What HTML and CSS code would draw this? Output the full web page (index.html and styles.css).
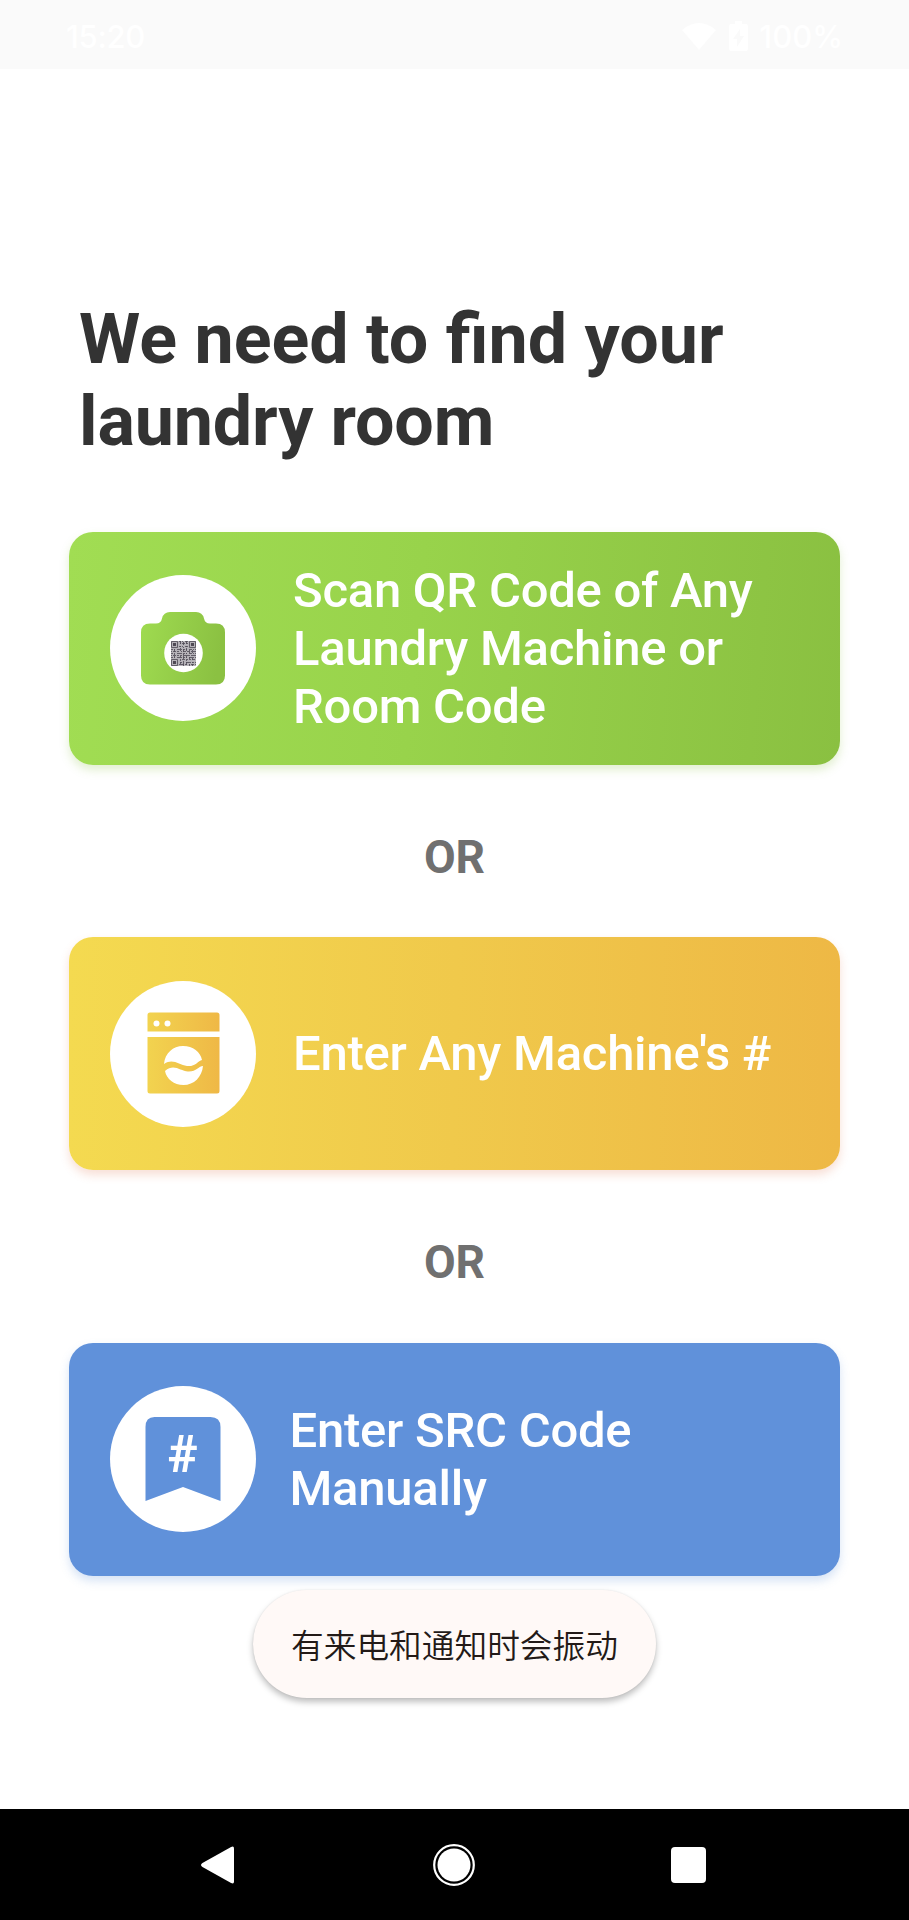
FILE: index.html
```html
<!DOCTYPE html>
<html lang="en">
<head>
<meta charset="utf-8">
<title>Find your laundry room</title>
<link rel="stylesheet" href="styles.css">
</head>
<body>
<header class="status">
  <span class="clock">15:20</span>
  <div class="status-icons">
    <svg class="wifi" width="36" height="28" viewBox="0 0 36 28"><path d="M1 8Q18-6 35 8L18 28Z"/></svg>
    <svg class="battery" width="19" height="30" viewBox="0 0 19 30"><path fill-rule="evenodd" d="M6 0h7v3h4q2 0 2 2v23q0 2-2 2H2q-2 0-2-2V5q0-2 2-2h4ZM11 8 4 18h4v8l7-11h-4Z"/></svg>
    <span class="percent">100%</span>
  </div>
</header>
<main class="content">
  <h1 class="title">We need to find your<br><span class="title-end">laundry room</span></h1>
  <a class="card card-scan">
    <svg class="badge" width="146" height="146" viewBox="0 0 146 146">
      <defs><linearGradient id="green" x1="0" x2="1" y1="0" y2=".15"><stop stop-color="#9fdb50"/><stop offset="1" stop-color="#8bc142"/></linearGradient></defs>
      <circle cx="73" cy="73" r="73" fill="#fff"/>
      <path fill="url(#green)" d="M40 48.500h6q5 0 6-5 1.500-6.500 8-6.500h26q6.500 0 8 6.500 1 5 6 5h6q9 0 9 9v43q0 9-9 9H40q-9 0-9-9v-43q0-9 9-9Z"/>
      <circle cx="73.500" cy="78" r="19.300" fill="#fff"/>
      <g transform="translate(61 66)" fill="none" stroke="#4e4954" stroke-opacity=".8">
        <rect width="25" height="25" fill="#b5b2b8" stroke="none"/>
        <path stroke-dasharray="2 1 1 2 3 1 1 1" d="M8 .5h9M0 8.500h25M0 12.500h25M8 5.500h10M0 16.500h25M9 21.500h16"/>
        <path stroke-dasharray="1 1 3 1 2 2" d="M9 2.500h8M0 10.500h25M0 14.500h25M9 18.500h16M8 23.500h17"/>
        <path stroke-dasharray="3 2 1 1" d="M9.500 0v25M12.500 1v24M15.500 0v25M18.500 9v16M21.500 9v16M3.500 8v9"/>
        <path d="M.5.500h6v6h-6ZM18.500.500h6v6h-6ZM.5 18.500h6v6h-6Z"/>
        <path fill="#4e4954" stroke="none" d="M2 2h3v3H2ZM20 2h3v3h-3ZM2 20h3v3H2Z"/>
      </g>
    </svg>
    <span class="label">Scan QR Code of Any<br>Laundry Machine or<br>Room Code</span>
  </a>
  <div class="or">OR</div>
  <a class="card card-machine">
    <svg class="badge" width="146" height="146" viewBox="0 0 146 146">
      <defs><linearGradient id="gold"><stop stop-color="#f2d34f"/><stop offset="1" stop-color="#efb846"/></linearGradient></defs>
      <circle cx="73" cy="73" r="73" fill="#fff"/>
      <path fill="url(#gold)" fill-rule="evenodd" d="M40 31.500h67q2.500 0 2.500 2.500v16.500h-72V34q0-2.500 2.500-2.500ZM37.500 56h72v54q0 2.500-2.500 2.500H40q-2.500 0-2.500-2.500Z"/>
      <g fill="#fff"><circle cx="46.500" cy="42.500" r="3"/><circle cx="57.500" cy="42.500" r="3"/>
      <path d="M54 83C55 72 63 65 73 65S90.500 71 92 79C88 80 85 86 77 85 69 84 63 77 54 83ZM55 90C64 82 70 90 78 90.500 86 91 89 85 93 85 92 96 84 104 73.500 104 64 104 56.500 98 55 90Z"/></g>
    </svg>
    <span class="label">Enter Any Machine's #</span>
  </a>
  <div class="or or-last">OR</div>
  <a class="card card-code">
    <svg class="badge" width="146" height="146" viewBox="0 0 146 146">
      <circle cx="73" cy="73" r="73" fill="#fff"/>
      <path fill="#6091da" d="M44.500 31h56q10 0 10 10v74L73 101l-37.500 14V41q0-10 9-10Z"/>
      <text class="hash" x="72.500" y="85.500">#</text>
    </svg>
    <span class="label">Enter SRC Code<br>Manually</span>
  </a>
</main>
<div class="toast" lang="zh-CN">有来电和通知时会振动</div>
<nav class="nav">
  <svg width="33" height="40" viewBox="0 0 34 40"><path d="M1.500 18 31 1.500q3-1.500 3 1.500v34q0 3-3 1.500L1.500 22q-3-2 0-4Z"/></svg>
  <svg width="42" height="42" viewBox="0 0 42 42"><circle cx="21" cy="21" r="16.500"/><circle cx="21" cy="21" r="19.800" fill="none" stroke="#fff" stroke-width="2.200"/></svg>
  <svg width="35" height="36" viewBox="0 0 35 36"><rect width="35" height="36" rx="4"/></svg>
</nav>
</body>
</html>
```
FILE: styles.css
```css
* { box-sizing: border-box; }
body {
  margin: 0;
  height: 1920px;
  display: flex;
  flex-direction: column;
  background: #fff;
  font-family: Roboto, "Liberation Sans", sans-serif;
  overflow: hidden;
}
svg { display: block; flex: none; }
.status {
  height: 69px;
  padding: 3px 66px 0;
  display: flex;
  align-items: center;
  justify-content: space-between;
  background: #fafafa;
  color: #fff;
  fill: #fff;
  font: 500 31px/1 Inter, Roboto, sans-serif;
}
.clock { letter-spacing: -0.3px; }
.status-icons { display: flex; align-items: center; }
.battery { margin: 0 11px 0 12px; }
.content {
  flex: 1;
  padding: 229px 69px 0;
}
.title {
  margin: 0 0 63px;
  padding-left: 10px;
  color: #333;
  font-size: 70px;
  font-weight: 700;
  line-height: 82px;
  height: 171px;
}
.title-end { letter-spacing: -0.150px; }
.card {
  height: 233px;
  display: flex;
  align-items: center;
  padding-left: 41px;
  border-radius: 24px;
  color: #fff;
  width: 771px;
}
.card-scan {
  background: linear-gradient(95deg, #a1dd53, #98d34b 45%, #8ac041);
  box-shadow: 0 5px 10px rgba(139, 193, 66, .25);
}
.card-scan .badge,
.card-code .badge { margin-bottom: 2px; }
.card-machine {
  background: linear-gradient(91deg, #f4da50, #f0c94b 50%, #eeb845);
  box-shadow: 0 5px 10px rgba(225, 110, 70, .22);
}
.card-code {
  background: #6091da;
  box-shadow: 0 5px 10px rgba(96, 145, 218, .26);
}
.hash {
  fill: #fff;
  font-size: 51px;
  font-weight: 700;
  text-anchor: middle;
}
.label {
  margin-left: 37px;
  font-size: 49px;
  font-weight: 500;
  line-height: 58px;
  letter-spacing: -0.250px;
  white-space: nowrap;
}
.card-code .label { margin-left: 33.500px; }
.or {
  height: 172px;
  padding-top: 12px;
  color: #707070;
  font-size: 46px;
  font-weight: 700;
  line-height: 160px;
  text-align: center;
}
.or-last { height: 173px; }
.toast {
  position: absolute;
  left: 253px;
  top: 1590px;
  width: 403px;
  height: 108px;
  border-radius: 54px;
  background: #fff9f7;
  color: #231a17;
  font: 350 32.700px/108px "Noto Sans CJK SC", sans-serif;
  text-align: center;
  box-shadow: 0 4px 6px rgba(0, 0, 0, .25), 0 0 2px rgba(0, 0, 0, .08);
}
.nav {
  height: 111px;
  padding: 0 203px 0 201px;
  display: flex;
  align-items: center;
  justify-content: space-between;
  background: #000;
  fill: #fff;
}
.nav svg:nth-child(2) { margin-left: 2px; }
```
